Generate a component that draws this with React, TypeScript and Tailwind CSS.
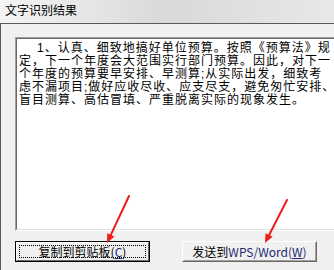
import React from 'react';

const cjk = { fontFamily: '"Noto Sans CJK SC", "Liberation Sans", sans-serif' };
const body = { fontFamily: '"Liberation Sans", "Noto Sans CJK SC", sans-serif' };

const lines = [
  '1、认真、细致地搞好单位预算。按照《预算法》规',
  '定，下一个年度会大范围实行部门预算。因此，对下一',
  '个年度的预算要早安排、早测算;从实际出发，细致考',
  '虑不漏项目;做好应收尽收、应支尽支，避免匆忙安排、',
  '盲目测算、高估冒填、严重脱离实际的现象发生。',
];

const Arrow: React.FC<{ x1: number; y1: number; x2: number; y2: number }> = ({ x1, y1, x2, y2 }) => {
  const a = Math.atan2(y2 - y1, x2 - x1);
  const len = 9;
  const w = 4;
  const bx = x2 - len * Math.cos(a);
  const by = y2 - len * Math.sin(a);
  const px = -Math.sin(a) * w;
  const py = Math.cos(a) * w;
  return (
    <g>
      <line x1={x1} y1={y1} x2={bx} y2={by} stroke="#f01c1c" strokeWidth={2} strokeLinecap="round" />
      <polygon points={`${x2},${y2} ${bx + px},${by + py} ${bx - px},${by - py}`} fill="#f01c1c" />
    </g>
  );
};

const App: React.FC = () => {
  return (
    <div className="relative w-[334px] h-[270px] overflow-hidden bg-[#f0f0f0]" style={cjk}>
      {/* title bar (blurred glass) */}
      <div className="h-[23px] bg-gradient-to-r from-[#f4f4f4] via-[#d9d9d9] to-[#e8e8e8] pl-[5px] pt-[2px] text-[12px] leading-[16px] text-black">
        文字识别结果
      </div>

      <div className="flex h-[247px]">
        {/* blurred frame edge */}
        <div className="w-[2px] bg-gradient-to-b from-[#d8d8d8] via-[#b8b8b8] to-[#cfcfcf]" />

        <div className="flex-1 border-l border-t border-[#5a5a5a] bg-[#f0f0f0] pl-[14px] pt-[13px]">
          {/* edit box */}
          <div className="w-[330px] h-[194px] border border-[#a0a0a0] border-b-white border-r-white">
            <div
              className="h-full border border-[#696969] border-b-[#e3e3e3] border-r-[#e3e3e3] bg-white pl-[2px] pt-[3px] text-[12px] tracking-[1px] leading-[13px] text-black"
              style={body}
            >
              {lines.map((l, i) => (
                <div key={i} className={`whitespace-nowrap ${i === 0 ? 'pl-[18px]' : ''}`}>
                  {l}
                </div>
              ))}
            </div>
          </div>

          {/* buttons */}
          <div className="flex gap-[32px] mt-[10px]">
            <button className="w-[135px] h-[21px] border border-black bg-[#f0f0f0] p-0">
              <div className="h-full border border-white border-b-[#696969] border-r-[#696969] p-[2px]">
                <div className="h-full border border-dotted border-black flex items-center justify-center text-[12px] leading-[13px] text-black">
                  复制到剪贴板(<span className="underline text-[#1d2a70]">C</span>)
                </div>
              </div>
            </button>
            <button className="w-[135px] h-[21px] border border-white border-b-[#696969] border-r-[#696969] bg-[#f0f0f0] p-0">
              <div className="h-full border border-[#f0f0f0] border-b-[#a0a0a0] border-r-[#a0a0a0] flex items-center justify-center text-[12px] leading-[13px] text-black">
                发送到<span className="text-[#1d2a70]">WPS/Word(<span className="underline">W</span>)</span>
              </div>
            </button>
          </div>
        </div>
      </div>

      {/* red annotation arrows */}
      <svg className="absolute left-0 top-0 pointer-events-none" width={334} height={270}>
        <Arrow x1={129} y1={196} x2={107} y2={243} />
        <Arrow x1={287} y1={200} x2={265} y2={243} />
      </svg>
    </div>
  );
};

export default App;
